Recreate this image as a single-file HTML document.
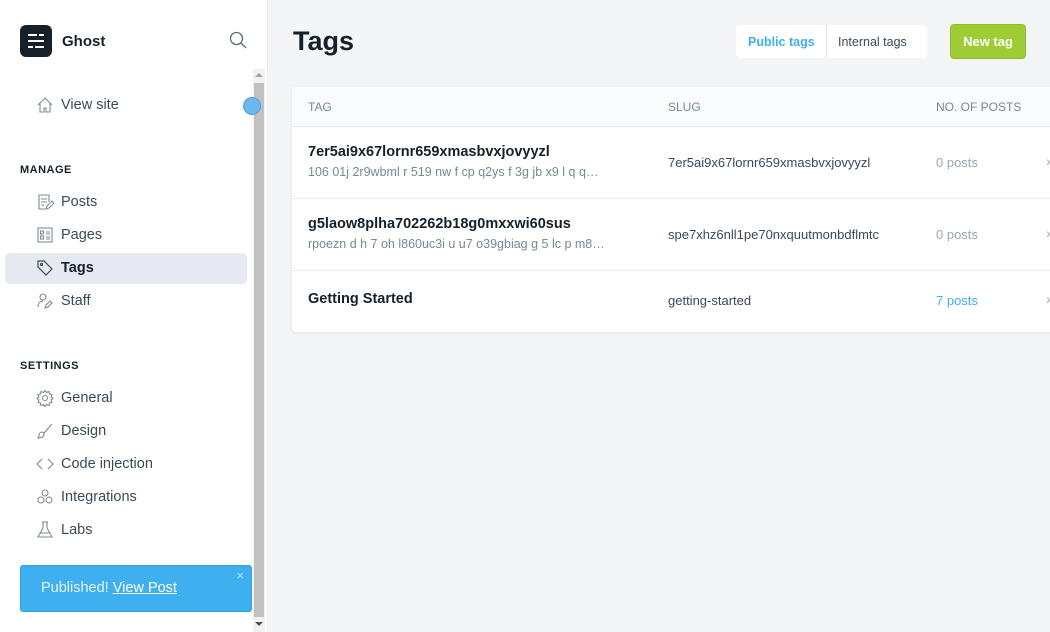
<!DOCTYPE html>
<html><head><meta charset="utf-8"><style>
*{box-sizing:border-box;margin:0;padding:0}
body{width:1050px;height:632px;overflow:hidden;font-family:"Liberation Sans",sans-serif;background:#f4f5f7;position:relative;color:#15212a}
.side{position:absolute;left:0;top:0;width:268px;height:632px;background:#fff;border-right:1px solid #e5eaef}
.logo{position:absolute;left:20px;top:25px;width:32px;height:32px;background:#15212a;border-radius:6px}
.logo i{position:absolute;height:2px;background:#fff}
.brand{position:absolute;left:62px;top:33px;font-weight:bold;font-size:15px;color:#15212a}
.sb{position:absolute;left:253px;top:69px;width:12px;height:563px;background:#f1f1f1}
.sb .th{position:absolute;left:1px;top:14px;width:10px;height:534px;background:#c1c1c1}
.nav{position:absolute;left:61px;font-size:14.5px;color:#3a4a58}
.ic{position:absolute;left:36px;width:18px;height:18px}
.hd{position:absolute;left:20px;font-size:11px;font-weight:bold;letter-spacing:.5px;color:#15212a}
.act{position:absolute;left:5px;top:253px;width:242px;height:31px;background:#e6eaf0;border-radius:5px}
.toast{position:absolute;left:20px;top:565px;width:232px;height:47px;background:#3eb0ef;border-radius:3px;border:1px solid #2fa0e0;color:#e6f4fd;font-size:14.5px;padding:14px 0 0 20px}
.toast u{color:#fff}
h1{position:absolute;left:293px;top:26px;font-size:27px;font-weight:bold;color:#15212a}
.seg{position:absolute;left:736px;top:25px;width:191px;height:33px;background:#fff;border-radius:4px;font-size:12.5px}
.seg span{position:absolute;top:10px}
.btn{position:absolute;left:950px;top:24px;width:76px;height:35px;background:#9fcc35;border:1px solid #8fbf2a;border-radius:4px;color:#fff;font-weight:bold;font-size:13px;text-align:center;line-height:33px}
.card{position:absolute;left:292px;top:87px;width:770px;height:245px;background:#fff;border-radius:4px;box-shadow:0 1px 3px rgba(0,0,0,.08)}
.th1{position:absolute;top:0;left:0;right:0;height:40px;background:#fafbfc;border-bottom:1px solid #e5eaef}
.col{position:absolute;font-size:12px;color:#738a94}
.row{position:absolute;left:0;right:0;border-bottom:1px solid #e5eaef}
.t{position:absolute;left:16px;font-weight:bold;font-size:14.5px;color:#15212a}
.d{position:absolute;left:16px;font-size:12.5px;color:#738a94}
.s{position:absolute;left:376px;font-size:13px;color:#3a4a58}
.n{position:absolute;left:644px;font-size:13px;color:#9ba9b2}
.ch{position:absolute;left:754px;font-size:14px;color:#9ba9b2}
</style></head><body>
<div class="side">
 <div class="logo"><i style="left:8px;top:9px;width:9px"></i><i style="left:19px;top:9px;width:5px"></i><i style="left:8px;top:15px;width:16px"></i><i style="left:8px;top:21px;width:5px"></i><i style="left:15px;top:21px;width:9px"></i></div>
 <div class="brand">Ghost</div>
 <svg style="position:absolute;left:229px;top:31px" width="18" height="18" viewBox="0 0 18 18" fill="none" stroke="#5a6a78" stroke-width="1.3"><circle cx="7.5" cy="7.5" r="6"/><path d="M12 12l5 5"/></svg>
 <div class="sb"><div class="th"></div>
  <div style="position:absolute;left:2px;top:4px;border:4px solid transparent;border-bottom:4px solid #a3a3a3;border-top:0"></div>
  <div style="position:absolute;left:2px;top:553px;border:4px solid transparent;border-top:4px solid #505050;border-bottom:0"></div></div>
 <div style="position:absolute;left:243px;top:97px;width:18px;height:18px;border-radius:50%;background:#6cb8ee;border:1px solid #49a2e3"></div>
 <svg class="ic" style="top:96px" viewBox="0 0 18 18" fill="none" stroke="#7d8b96" stroke-width="1.1"><path d="M2 9L9 2l7 7M4 7v9h4v-4h2v4h4V7"/></svg>
 <div class="nav" style="top:97px">View site</div>
 <div class="hd" style="top:164px">MANAGE</div>
 <div class="act"></div>
 <svg class="ic" style="top:193px" viewBox="0 0 18 18" fill="none" stroke="#7d8b96" stroke-width="1.1"><path d="M3 2h10v7M3 2v14h6M5 6h6M5 9h6M5 12h3M10 16l1-3 5-5 2 2-5 5z"/></svg>
 <div class="nav" style="top:194px">Posts</div>
 <svg class="ic" style="top:226px" viewBox="0 0 18 18" fill="none" stroke="#7d8b96" stroke-width="1.1"><rect x="2" y="2" width="14" height="14"/><rect x="4.5" y="5" width="3" height="3"/><rect x="4.5" y="10" width="3" height="3"/><path d="M10 6h4M10 8h4M10 11h4M10 13h4"/></svg>
 <div class="nav" style="top:227px">Pages</div>
 <svg class="ic" style="top:259px" viewBox="0 0 18 18" fill="none" stroke="#3a4a58" stroke-width="1.2"><path d="M2 2h6l8 8-6 6-8-8z"/><circle cx="5.5" cy="5.5" r="1"/></svg>
 <div class="nav" style="top:260px;font-weight:bold;color:#15212a">Tags</div>
 <svg class="ic" style="top:292px" viewBox="0 0 18 18" fill="none" stroke="#7d8b96" stroke-width="1.1"><circle cx="7" cy="5" r="3"/><path d="M2 15c0-4 2-6 5-6M9 16l1-3 4-4 2 2-4 4z"/></svg>
 <div class="nav" style="top:293px">Staff</div>
 <div class="hd" style="top:360px">SETTINGS</div>
 <svg class="ic" style="top:389px" viewBox="0 0 18 18" fill="none" stroke="#7d8b96" stroke-width="1.1"><circle cx="9" cy="9" r="2.5"/><path d="M9 1.5l1.5 2 2.5-1 .5 2.5 2.5.5-1 2.5 2 1.5-2 1.5 1 2.5-2.5.5-.5 2.5-2.5-1-1.5 2-1.5-2-2.5 1-.5-2.5-2.5-.5 1-2.5-2-1.5 2-1.5-1-2.5 2.5-.5.5-2.5 2.5 1z"/></svg>
 <div class="nav" style="top:390px">General</div>
 <svg class="ic" style="top:422px" viewBox="0 0 18 18" fill="none" stroke="#7d8b96" stroke-width="1.1"><path d="M16 2L8 11M8 11l-2-1c-2 0-3 2-3 4l-1 2c3 0 6-1 6-4z"/></svg>
 <div class="nav" style="top:423px">Design</div>
 <svg class="ic" style="top:455px" viewBox="0 0 18 18" fill="none" stroke="#7d8b96" stroke-width="1.1"><path d="M6 4L1 9l5 5M12 4l5 5-5 5"/></svg>
 <div class="nav" style="top:456px">Code injection</div>
 <svg class="ic" style="top:488px" viewBox="0 0 18 18" fill="none" stroke="#7d8b96" stroke-width="1.1"><circle cx="9" cy="5" r="3"/><circle cx="5" cy="12" r="3"/><circle cx="13" cy="12" r="3"/></svg>
 <div class="nav" style="top:489px">Integrations</div>
 <svg class="ic" style="top:521px" viewBox="0 0 18 18" fill="none" stroke="#7d8b96" stroke-width="1.1"><path d="M6 1h6M7 1v6L2 16h14L11 7V1M4 12h10"/></svg>
 <div class="nav" style="top:522px">Labs</div>
 <div class="toast">Published! <u>View Post</u><span style="position:absolute;right:7px;top:2px;font-size:13px;color:#bfe3f9">×</span></div>
</div>
<h1>Tags</h1>
<div class="seg"><span style="left:12px;color:#3eb0ef;font-weight:bold">Public tags</span><div style="position:absolute;left:90px;top:0;width:1px;height:33px;background:#dde9f3"></div><span style="left:102px;color:#3a4a58">Internal tags</span></div>
<div class="btn">New tag</div>
<div class="card">
 <div class="th1"><span class="col" style="left:16px;top:13px">TAG</span><span class="col" style="left:376px;top:13px">SLUG</span><span class="col" style="left:644px;top:13px">NO. OF POSTS</span></div>
 <div class="row" style="top:40px;height:72px"><div class="t" style="top:17px">7er5ai9x67lornr659xmasbvxjovyyzl</div><div class="d" style="top:38px">106 01j 2r9wbml r 519 nw f cp q2ys f 3g jb x9 l q q…</div><div class="s" style="top:28px">7er5ai9x67lornr659xmasbvxjovyyzl</div><div class="n" style="top:28px">0 posts</div><div class="ch" style="top:26px">›</div></div>
 <div class="row" style="top:112px;height:72px"><div class="t" style="top:17px">g5laow8plha702262b18g0mxxwi60sus</div><div class="d" style="top:38px">rpoezn d h 7 oh l860uc3i u u7 o39gbiag g 5 lc p m8…</div><div class="s" style="top:28px">spe7xhz6nll1pe70nxquutmonbdflmtc</div><div class="n" style="top:28px">0 posts</div><div class="ch" style="top:26px">›</div></div>
 <div class="row" style="top:184px;height:61px;border:0"><div class="t" style="top:20px">Getting Started</div><div class="s" style="top:22px">getting-started</div><div class="n" style="top:22px;color:#3eb0ef">7 posts</div><div class="ch" style="top:20px">›</div></div>
</div>
</body></html>
